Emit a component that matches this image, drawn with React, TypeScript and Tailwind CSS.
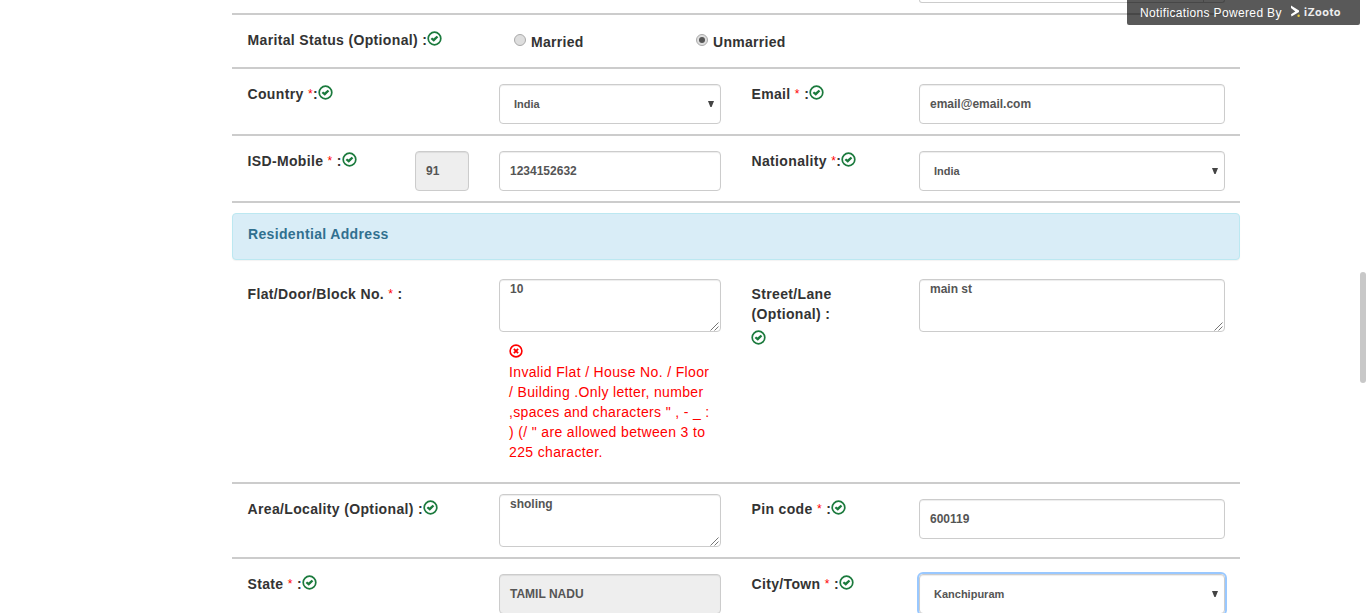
import React from "react";

const OkCircle = ({ className = "" }: { className?: string }) => (
  <svg className={`shrink-0 ${className}`} width="15" height="15" viewBox="0 0 15 15">
    <circle cx="7.5" cy="7.5" r="6.3" fill="none" stroke="#1b7a3d" strokeWidth="1.7" />
    <path d="M3.6 7.9L5.1 6.5L6.5 7.4L9.7 4.7L11.3 6.2L6.8 10.8Z" fill="#1b7a3d" />
  </svg>
);

const RemoveCircle = () => (
  <svg className="block" width="14" height="14" viewBox="0 0 14 14">
    <circle cx="7" cy="7" r="5.9" fill="none" stroke="#f00" strokeWidth="1.6" />
    <path d="M4.9 4.9L9.1 9.1M9.1 4.9L4.9 9.1" stroke="#f00" strokeWidth="1.9" />
  </svg>
);

type LabelProps = { text: string; star?: boolean; gap?: boolean; ok?: boolean };

const Label = ({ text, star, gap = true, ok = true }: LabelProps) => (
  <div className="flex h-5 items-start pl-[0.5px] font-bold leading-5 tracking-[0.35px] whitespace-pre text-[#333]">
    <span>{text} </span>
    {star && <span className="text-[12px] font-normal text-[#f00]">*</span>}
    <span>{star && gap ? " :" : ":"}</span>
    {ok && <OkCircle className="mt-px" />}
  </div>
);

const field =
  "w-full rounded-[4px] border border-[#ccc] font-bold leading-[17px] text-[#555] shadow-[inset_0_1px_1px_rgba(0,0,0,0.075)]";

const Input = ({ value, disabled }: { value: string; disabled?: boolean }) => (
  <div className={`${field} flex h-10 items-center px-[10px] text-[12px] ${disabled ? "bg-[#eee]" : "bg-white"}`}>
    {value}
  </div>
);

const Select = ({ value, focus }: { value: string; focus?: boolean }) => (
  <div
    className={`${field} flex h-10 items-center justify-between bg-white pr-[6px] pl-[14px] text-[11px] ${focus ? "outline-2 outline-[#99c8ff]" : ""}`}
  >
    <span>{value}</span>
    <svg className="-mt-px" width="6" height="6" viewBox="0 0 6 6">
      <path d="M0 0H6L3.6 6H2.4Z" fill="#444" />
    </svg>
  </div>
);

const Area = ({ value }: { value: string }) => (
  <div className={`${field} flex h-[53px] justify-between bg-white pt-px pr-[1px] pl-[10px] text-[12px]`}>
    <span>{value}</span>
    <svg className="self-end" width="9" height="9" viewBox="0 0 9 9">
      <path d="M0.5 8.5L8.5 0.5M4.5 8.5L8.5 4.5" stroke="#666" strokeWidth="0.9" />
    </svg>
  </div>
);

const Radio = ({ label, checked }: { label: string; checked?: boolean }) => (
  <div className="flex w-[182px] items-start">
    <span className="mt-px flex size-3 items-center justify-center rounded-full border border-[#aaa] bg-[#dedede]">
      {checked && <span className="size-1.5 rounded-full bg-[#555]" />}
    </span>
    <span className="-mt-px ml-[5px] font-bold leading-5 tracking-[0.3px] text-[#333]">{label}</span>
  </div>
);

const Row = ({ className = "", children }: { className?: string; children: React.ReactNode }) => (
  <div className={`grid grid-cols-12 items-start border-b-2 border-[#ccc] ${className}`}>{children}</div>
);

export default function App() {
  return (
    <div className="relative h-[613px] w-full overflow-hidden bg-white font-['Liberation_Sans',Arial,sans-serif] text-[14px] text-[#333]">
      <main className="ml-[232px] w-[1008px]">
        <Row className="h-[15px]">
          <div className="col-span-4 col-start-9 px-[15px]">
            <div className="flex h-[3px] justify-end rounded-b-[4px] border border-t-0 border-[#ccc] pr-[20px]">
              <div className="h-[2px] w-px bg-[#ccc]" />
            </div>
          </div>
        </Row>

        <Row className="h-[54px]">
          <div className="col-span-3 px-[15px] pt-[15px]">
            <Label text="Marital Status (Optional)" />
          </div>
          <div className="col-span-8 flex pt-[18px] pl-[30px]">
            <Radio label="Married" />
            <Radio label="Unmarried" checked />
          </div>
        </Row>

        <Row className="h-[67px]">
          <div className="col-span-3 px-[15px] pt-[15px]">
            <Label text="Country" star gap={false} />
          </div>
          <div className="col-span-3 px-[15px] pt-[15px]">
            <Select value="India" />
          </div>
          <div className="col-span-2 px-[15px] pt-[15px]">
            <Label text="Email" star />
          </div>
          <div className="col-span-4 px-[15px] pt-[15px]">
            <Input value="email@email.com" />
          </div>
        </Row>

        <Row className="h-[67px]">
          <div className="col-span-2 px-[15px] pt-[15px]">
            <Label text="ISD-Mobile" star />
          </div>
          <div className="px-[15px] pt-[15px]">
            <Input value="91" disabled />
          </div>
          <div className="col-span-3 px-[15px] pt-[15px]">
            <Input value="1234152632" />
          </div>
          <div className="col-span-2 px-[15px] pt-[15px]">
            <Label text="Nationality" star gap={false} />
          </div>
          <div className="col-span-4 px-[15px] pt-[15px]">
            <Select value="India" />
          </div>
        </Row>

        <div className="mt-[10px] h-[47px] rounded-[4px] border border-[#bce8f1] bg-[#d9edf7] px-[15px] pt-[10px] font-bold leading-5 tracking-[0.35px] text-[#31708f] shadow-[0_1px_1px_rgba(0,0,0,0.05)]">
          Residential Address
        </div>

        <Row className="h-[224px] pt-[9px]">
          <div className="col-span-3 px-[15px] pt-[15px]">
            <Label text="Flat/Door/Block No." star ok={false} />
          </div>
          <div className="col-span-3 px-[15px] pt-[10px]">
            <Area value="10" />
            <div className="mt-3 pl-[10px] leading-5 tracking-[0.35px] text-[#f00]">
              <RemoveCircle />
              <p className="mt-1 whitespace-nowrap">
                Invalid Flat / House No. / Floor
                <br />/ Building .Only letter, number
                <br />
                ,spaces and characters " , - _ :
                <br />) (/ " are allowed between 3 to
                <br />
                225 character.
              </p>
            </div>
          </div>
          <div className="col-span-2 px-[15px] pt-[15px]">
            <p className="pl-[0.5px] font-bold leading-5 tracking-[0.35px]">Street/Lane (Optional) :</p>
            <OkCircle className="mt-[6px]" />
          </div>
          <div className="col-span-4 px-[15px] pt-[10px]">
            <Area value="main st" />
          </div>
        </Row>

        <Row className="h-[75px]">
          <div className="col-span-3 px-[15px] pt-[15px]">
            <Label text="Area/Locality (Optional)" />
          </div>
          <div className="col-span-3 px-[15px] pt-[10px]">
            <Area value="sholing" />
          </div>
          <div className="col-span-2 px-[15px] pt-[15px]">
            <Label text="Pin code" star />
          </div>
          <div className="col-span-4 px-[15px] pt-[15px]">
            <Input value="600119" />
          </div>
        </Row>

        <Row className="h-[67px]">
          <div className="col-span-3 px-[15px] pt-[15px]">
            <Label text="State" star />
          </div>
          <div className="col-span-3 px-[15px] pt-[15px]">
            <Input value="TAMIL NADU" disabled />
          </div>
          <div className="col-span-2 px-[15px] pt-[15px]">
            <Label text="City/Town" star />
          </div>
          <div className="col-span-4 px-[15px] pt-[15px]">
            <Select value="Kanchipuram" focus />
          </div>
        </Row>
      </main>

      <div className="absolute top-0 left-[1127px] flex h-[25px] w-[233px] items-center rounded-b-[2px] bg-black/65 pl-[13px] text-white">
        <span className="w-[150px] text-[12px] tracking-[0.35px] whitespace-nowrap">Notifications Powered By</span>
        <svg className="-mt-[2px]" width="11" height="13" viewBox="0 0 11 13">
          <path d="M1 0.5L9 5.5L9 7L1.5 11.5L1 9.3L5.3 6.6L1 3Z" fill="#fff" />
          <circle cx="8.6" cy="10.8" r="1.2" fill="#e8c93a" />
        </svg>
        <span className="ml-[3px] font-['Inter',sans-serif] text-[11px] font-bold tracking-[0.4px] text-[#eee]">iZooto</span>
      </div>

      <div className="absolute top-[272px] left-[1360px] h-[111px] w-[6px] rounded-full bg-[#c8c8c8]" />
    </div>
  );
}
